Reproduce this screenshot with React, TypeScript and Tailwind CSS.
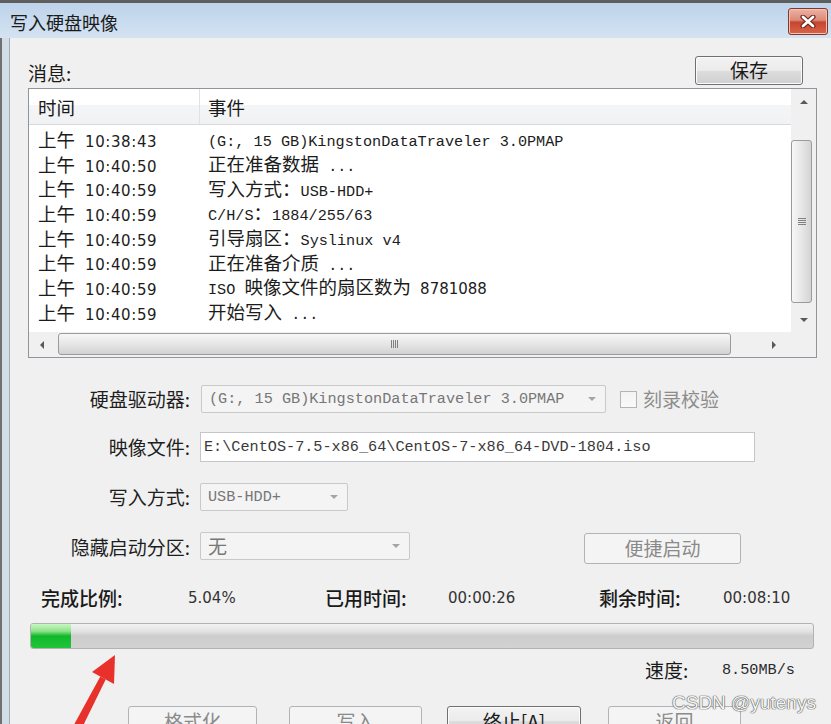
import React from "react";

type Seg = { t: string; k: "m" | "c" | "s" };
const m = (t: string): Seg => ({ t, k: "m" });
const c = (t: string): Seg => ({ t, k: "c" });
const s = (t: string): Seg => ({ t, k: "s" });

const mono = "font-['Liberation_Mono','Noto_Sans_CJK_SC',monospace] text-[15.2px]";
const cjk = "font-['Noto_Sans_CJK_SC',sans-serif] text-[18.5px]";
const cjkL = "font-['Noto_Sans_CJK_SC',sans-serif] text-[19px]";
const sans = "font-['DejaVu_Sans','Noto_Sans_CJK_SC',sans-serif] text-[15px]";

const btnOn =
  "flex items-center justify-center rounded-[3px] border border-[#707070] bg-[linear-gradient(to_bottom,#f3f3f3_0%,#ebebeb_50%,#dddddd_51%,#cfcfcf_100%)] shadow-[inset_0_0_0_1px_#fbfbfb] text-[19px] text-[#1a1a1a]";
const btnOff =
  "flex items-center justify-center rounded-[3px] border border-[#b0b4b7] bg-[#f4f4f4] text-[19px] text-[#8a8a8a]";

const logs: { time: string; ev: Seg[] }[] = [
  { time: "10:38:43", ev: [m("(G:, 15 GB)KingstonDataTraveler 3.0PMAP")] },
  { time: "10:40:50", ev: [c("正在准备数据"), m(" ...")] },
  { time: "10:40:59", ev: [c("写入方式："), m("USB-HDD+")] },
  { time: "10:40:59", ev: [m("C/H/S"), c("："), m("1884/255/63")] },
  { time: "10:40:59", ev: [c("引导扇区："), m("Syslinux v4")] },
  { time: "10:40:59", ev: [c("正在准备介质"), m(" ...")] },
  { time: "10:40:59", ev: [m("ISO "), c("映像文件的扇区数为"), m(" "), s("8781088")] },
  { time: "10:40:59", ev: [c("开始写入"), m(" ...")] },
];

const Tri = ({ dir, color = "#595959" }: { dir: "up" | "down" | "left" | "right"; color?: string }) => {
  if (dir === "up")
    return (
      <svg width="8" height="4">
        <polygon points="0,4 4,0 8,4" fill={color} />
      </svg>
    );
  if (dir === "down")
    return (
      <svg width="8" height="4">
        <polygon points="0,0 8,0 4,4" fill={color} />
      </svg>
    );
  if (dir === "left")
    return (
      <svg width="4" height="8">
        <polygon points="4,0 4,8 0,4" fill={color} />
      </svg>
    );
  return (
    <svg width="4" height="8">
      <polygon points="0,0 4,4 0,8" fill={color} />
    </svg>
  );
};

const Combo = ({ w, text, cjkText }: { w: string; text: string; cjkText?: boolean }) => (
  <div
    className={`flex h-[28px] items-center justify-between rounded-[2px] border border-[#c9c9c9] bg-[#f4f4f4] pl-[7px] pr-[9px] ${w}`}
  >
    <span className={`${cjkText ? cjkL : mono} leading-[26px] text-[#777777]`}>{text}</span>
    <Tri dir="down" color="#a4a4a4" />
  </div>
);

const CloseButton = () => (
  <div className="mr-[3px] mt-[5px] flex h-[27px] w-[40px] items-center justify-center rounded-[3px] border border-[#8b3326] bg-[linear-gradient(to_bottom,#ebb3a5_0%,#db8a76_45%,#c6452e_52%,#d7654b_100%)] shadow-[inset_0_0_0_1px_#f0c4b8]">
    <svg width="16" height="13" viewBox="0 0 16 13">
      <path d="M3 2 L13 11 M13 2 L3 11" stroke="#6a2219" strokeWidth="5" strokeLinecap="round" />
      <path d="M3 2 L13 11 M13 2 L3 11" stroke="#ffffff" strokeWidth="2.8" strokeLinecap="round" />
    </svg>
  </div>
);

const LogList = () => (
  <div className="mt-[3px] flex h-[270px] w-[789px] shrink-0 flex-col border border-[#8e959c] bg-white">
    <div className="flex h-[243px]">
      <div className="flex-1 overflow-hidden">
        <div className="flex h-[36px] border-b border-[#d9d9d9] bg-[linear-gradient(to_bottom,#ffffff_0%,#ffffff_45%,#f4f5f6_46%,#f1f2f4_100%)]">
          <div className={`flex w-[171px] items-center border-r border-[#e2e2e2] pl-[9px] pt-[3px] ${cjk}`}>时间</div>
          <div className={`flex items-center pl-[8px] pt-[3px] ${cjk}`}>事件</div>
        </div>
        <div className="pt-[3px]">
          {logs.map((r, i) => (
            <div key={i} className="flex h-[24.7px] items-center whitespace-pre text-[#1c1c1c]">
              <div className="flex w-[171px] items-baseline pl-[9px]">
                <span className={`${cjk} leading-[24px]`}>上午</span>
                <span className={`${sans} ml-[10px] tracking-[0.6px] leading-[24px]`}>{r.time}</span>
              </div>
              <div className="pl-[8px] leading-[24px]">
                {r.ev.map((g, j) => (
                  <span key={j} className={g.k === "m" ? mono : g.k === "c" ? cjk : sans}>
                    {g.t}
                  </span>
                ))}
              </div>
            </div>
          ))}
        </div>
      </div>
      <div className="flex w-[25px] flex-col bg-[#f0f0f0]">
        <div className="flex h-[25px] items-center justify-center">
          <Tri dir="up" />
        </div>
        <div className="flex-1">
          <div className="mr-[4px] mt-[26px] flex h-[163px] items-center justify-center rounded-[3px] border border-[#9b9b9b] bg-[linear-gradient(to_right,#f7f7f7,#e7e7e7_50%,#d4d4d4)]">
            <svg width="8" height="8">
              <path d="M0 0.5H8M0 2.5H8M0 4.5H8M0 6.5H8" stroke="#808080" strokeWidth="1" />
            </svg>
          </div>
        </div>
        <div className="flex h-[25px] items-center justify-center">
          <Tri dir="down" />
        </div>
      </div>
    </div>
    <div className="flex h-[25px]">
      <div className="flex flex-1 items-start bg-[#f0f0f0]">
        <div className="flex h-[25px] w-[25px] items-center justify-center">
          <Tri dir="left" />
        </div>
        <div className="ml-[4px] mt-[1px] flex h-[22px] w-[673px] items-center justify-center rounded-[3px] border border-[#9b9b9b] bg-[linear-gradient(to_bottom,#f7f7f7,#e6e6e6_50%,#d2d2d2)]">
          <svg width="8" height="8">
            <path d="M0.5 0V8M2.5 0V8M4.5 0V8M6.5 0V8" stroke="#808080" strokeWidth="1" />
          </svg>
        </div>
        <div className="flex-1" />
        <div className="flex h-[25px] w-[25px] items-center pl-[6px]">
          <Tri dir="right" />
        </div>
      </div>
      <div className="w-[25px] bg-[#f0f0f0]" />
    </div>
  </div>
);

const Label = ({ children }: { children: React.ReactNode }) => (
  <div className={`w-[162px] text-right leading-[26px] text-[#1e1e1e] ${cjkL}`}>{children}</div>
);

export default function App() {
  return (
    <div className="relative h-[724px] w-[831px] overflow-hidden bg-[#f0f0f0] font-['Noto_Sans_CJK_SC',sans-serif] text-[#1a1a1a]">
      <div className="h-[3px] bg-[#5e5e5e]" />
      <div className="flex h-[35px] items-start justify-between bg-[linear-gradient(to_bottom,#bdd3ea,#d4e3f2)]">
        <span className="ml-[10px] mt-[6px] text-[18px] leading-[26px] text-[#1b1b1b]">写入硬盘映像</span>
        <CloseButton />
      </div>
      <div className="flex">
        <div className="w-[10px] shrink-0 border-l-2 border-r border-l-[#707070] border-r-[#a2abb5] bg-[#d3dde8]" />
        <div className="flex flex-1 flex-col pl-[18px]">
          <div className="mt-[18px] flex h-[29px] shrink-0 items-center justify-between">
            <span className={`pt-[4px] leading-[24px] ${cjkL}`}>消息:</span>
            <div className={`${btnOn} mr-[28px] h-[29px] w-[108px]`}>保存</div>
          </div>

          <LogList />

          <div className="mt-[27px] flex h-[28px] shrink-0 items-center">
            <Label>硬盘驱动器:</Label>
            <div className="ml-[11px]">
              <Combo w="w-[405px]" text="(G:, 15 GB)KingstonDataTraveler 3.0PMAP" />
            </div>
            <div className="ml-[14px] h-[17px] w-[17px] border border-[#b4b4b4] bg-[linear-gradient(to_bottom,#f2f2f2,#fafafa)]" />
            <span className={`ml-[6px] leading-[26px] text-[#8c8c8c] ${cjkL}`}>刻录校验</span>
          </div>

          <div className="mt-[19px] flex h-[30px] shrink-0 items-center">
            <Label>映像文件:</Label>
            <div className="ml-[10px] flex h-[30px] w-[555px] items-center border border-[#c4c6ca] bg-white pl-[3px]">
              <span className={`${mono} leading-[26px] text-[#3a3a3a]`}>
                E:\CentOS-7.5-x86_64\CentOS-7-x86_64-DVD-1804.iso
              </span>
            </div>
          </div>

          <div className="mt-[20px] flex h-[29px] shrink-0 items-center">
            <Label>写入方式:</Label>
            <div className="ml-[10px]">
              <Combo w="w-[148px]" text="USB-HDD+" />
            </div>
          </div>

          <div className="mt-[21px] flex h-[32px] shrink-0 items-start">
            <Label>
              <span className="leading-[29px]">隐藏启动分区:</span>
            </Label>
            <div className="ml-[10px]">
              <Combo w="w-[210px]" text="无" cjkText />
            </div>
            <div className={`${btnOff} ml-[174px] mt-[1px] h-[31px] w-[157px]`}>便捷启动</div>
          </div>

          <div className="ml-[13px] mt-[22px] flex h-[24px] shrink-0 items-center leading-[24px]">
            <span className={`w-[147px] font-medium ${cjkL}`}>完成比例:</span>
            <span className={`w-[137px] text-[#333] ${sans}`}>5.04%</span>
            <span className={`w-[123px] font-medium ${cjkL}`}>已用时间:</span>
            <span className={`w-[151px] text-[#333] ${sans}`}>00:00:26</span>
            <span className={`w-[124px] font-medium ${cjkL}`}>剩余时间:</span>
            <span className={`text-[#333] ${sans}`}>00:08:10</span>
          </div>

          <div className="ml-[2px] mt-[13px] flex h-[26px] w-[784px] shrink-0 overflow-hidden rounded-[3px] border border-[#b2b2b2] bg-[linear-gradient(to_bottom,#f2f2f2_0%,#e3e3e3_30%,#cdcdcd_50%,#d2d2d2_100%)]">
            <div className="h-full w-[40px] rounded-l-[2px] bg-[linear-gradient(to_bottom,#c8f7c2_0%,#8ee28a_30%,#0fb829_50%,#22c43a_100%)]" />
          </div>

          <div className="ml-[617px] mt-[9px] flex h-[24px] shrink-0 items-center leading-[24px]">
            <span className={`w-[77px] ${cjkL}`}>速度:</span>
            <span className={`${mono} text-[#2a2a2a]`}>8.50MB/s</span>
          </div>

          <div className="ml-[100px] mt-[24px] flex h-[30px] shrink-0">
            <div className={`${btnOff} h-[30px] w-[129px]`}>格式化</div>
            <div className={`${btnOff} ml-[32px] h-[30px] w-[133px]`}>写入</div>
            <div className={`${btnOn} ml-[25px] h-[30px] w-[134px]`}>终止[A]</div>
            <div className={`${btnOff} ml-[27px] h-[30px] w-[133px]`}>返回</div>
          </div>
        </div>
      </div>

      <svg className="pointer-events-none absolute left-0 top-0" width="831" height="724">
        <polygon points="70,732 78,736 105.7,679.4 100.3,676.6" fill="#e8312a" />
        <polygon points="115,655 92,672 114,684" fill="#e8312a" />
      </svg>

      <div className="pointer-events-none absolute left-[672px] top-[692px] font-['Liberation_Sans',sans-serif] text-[19px] leading-[22px] text-[#f4f4f4] [text-shadow:0_0_1px_#555,0_0_1px_#555,0_0_1px_#666]">
        CSDN @yutenys
      </div>
    </div>
  );
}
